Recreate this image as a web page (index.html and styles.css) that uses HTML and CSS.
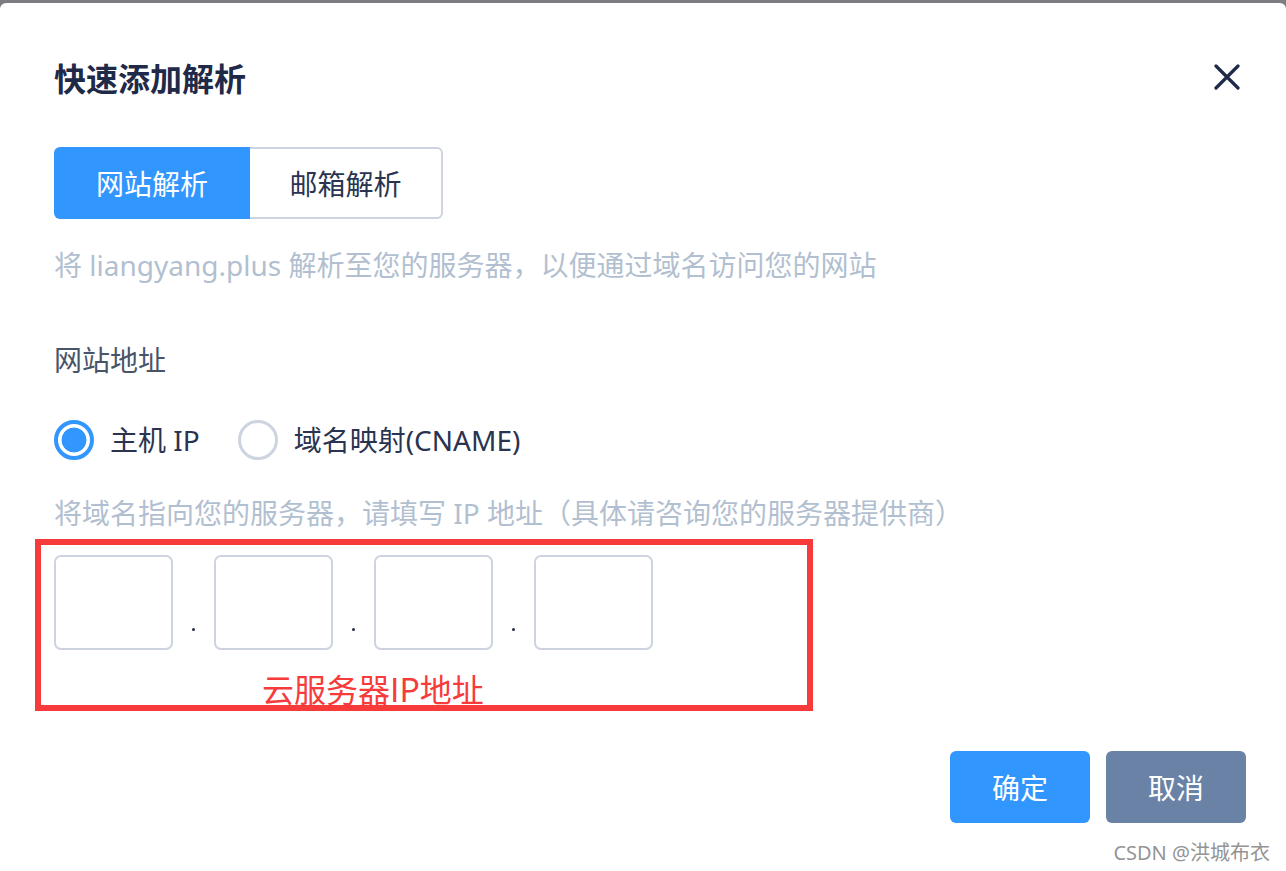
FILE: index.html
```html
<!DOCTYPE html>
<html lang="zh-CN">
<head>
<meta charset="utf-8">
<title>快速添加解析</title>
<link rel="stylesheet" href="styles.css">
</head>
<body>
<div class="dialog">
  <div class="header">
    <h1 class="title">快速添加解析</h1>
    <button class="close" aria-label="关闭">
      <svg width="26" height="26" viewBox="0 0 26 26"><path d="M2 2 L24 24 M24 2 L2 24" stroke="#1f2a48" stroke-width="3.2" stroke-linecap="round"/></svg>
    </button>
  </div>

  <div class="tabs">
    <div class="tab tab-active">网站解析</div>
    <div class="tab tab-idle">邮箱解析</div>
  </div>

  <p class="desc">将 liangyang.plus 解析至您的服务器，以便通过域名访问您的网站</p>

  <div class="label">网站地址</div>

  <div class="radios">
    <label class="radio"><span class="dot dot-on"></span><span class="radio-text">主机 IP</span></label>
    <label class="radio"><span class="dot"></span><span class="radio-text">域名映射(CNAME)</span></label>
  </div>

  <p class="hint">将域名指向您的服务器，请填写 IP 地址（具体请咨询您的服务器提供商）</p>

  <div class="annot">
    <div class="ip-row">
      <div class="ip-box"></div>
      <span class="sep"><i></i></span>
      <div class="ip-box"></div>
      <span class="sep"><i></i></span>
      <div class="ip-box"></div>
      <span class="sep"><i></i></span>
      <div class="ip-box"></div>
    </div>
    <div class="annot-text">云服务器IP地址</div>
  </div>

  <div class="actions">
    <button class="btn btn-ok">确定</button>
    <button class="btn btn-cancel">取消</button>
  </div>

  <div class="watermark">CSDN @洪城布衣</div>
</div>
</body>
</html>
```

FILE: styles.css
```css
html, body {
  margin: 0;
  padding: 0;
}
body {
  background: #7b7d81;
  font-family: "Noto Sans", "Noto Sans CJK SC", sans-serif;
  color: #2a3350;
}
.dialog {
  margin-top: 3px;
  background: #ffffff;
  border-radius: 6px 6px 0 0;
  height: 868px;
  box-sizing: border-box;
  padding: 54px 40px 0 54px;
}
.header {
  display: flex;
  align-items: center;
  justify-content: space-between;
  height: 40px;
}
.title {
  margin: 0;
  font-size: 32px;
  line-height: 40px;
  font-weight: 700;
  color: #1f2a48;
  font-family: "Noto Sans CJK SC", sans-serif;
}
.close {
  border: 0;
  background: none;
  padding: 0;
  margin-right: 6px;
  width: 26px;
  height: 26px;
  display: flex;
}
.tabs {
  display: flex;
  margin-top: 50px;
  height: 72px;
}
.tab {
  font-size: 28px;
  display: flex;
  align-items: center;
  justify-content: center;
  box-sizing: border-box;
  font-family: "Noto Sans CJK SC", sans-serif;
}
.tab-active {
  width: 196px;
  background: #3196fd;
  color: #ffffff;
  border-radius: 6px 0 0 6px;
}
.tab-idle {
  width: 193px;
  color: #2a3350;
  border: 2px solid #cdd3df;
  border-left: 0;
  border-radius: 0 6px 6px 0;
}
.desc {
  margin: 26px 0 0;
  font-size: 28px;
  line-height: 40px;
  color: #b2bfd0;
}
.label {
  margin-top: 55px;
  font-size: 28px;
  line-height: 40px;
  color: #4a5468;
}
.radios {
  margin-top: 40px;
  display: flex;
  align-items: center;
  height: 40px;
  gap: 38px;
}
.radio {
  display: flex;
  align-items: center;
  gap: 16px;
}
.dot {
  width: 40px;
  height: 40px;
  border-radius: 50%;
  box-sizing: border-box;
  border: 3px solid #cdd3df;
  background: #ffffff;
}
.dot-on {
  border: 4px solid #3196fd;
  background: radial-gradient(circle, #3196fd 0 12px, #ffffff 12.8px);
}
.radio-text {
  font-size: 28px;
  line-height: 40px;
  color: #2a3350;
}
.hint {
  margin: 33px 0 0;
  font-size: 28px;
  line-height: 40px;
  color: #b2bfd0;
}
.annot {
  margin: 6px 0 0 -19px;
  width: 778px;
  height: 172px;
  box-sizing: border-box;
  border: 6px solid #f73a3a;
  padding: 10px 0 0 13px;
}
.ip-row {
  display: flex;
  height: 95px;
}
.ip-box {
  width: 119px;
  height: 95px;
  box-sizing: border-box;
  border: 2px solid #cdd3df;
  border-radius: 7px;
}
.sep {
  width: 41px;
  display: flex;
  align-items: flex-end;
  justify-content: center;
  padding-bottom: 19px;
  box-sizing: border-box;
}
.sep i {
  width: 3px;
  height: 3px;
  border-radius: 50%;
  background: #1f2a48;
}
.annot-text {
  margin: 21px 0 0 208px;
  font-size: 32px;
  line-height: 34px;
  color: #f73a3a;
  font-family: "Noto Sans CJK SC", sans-serif;
}
.actions {
  margin-top: 40px;
  display: flex;
  justify-content: flex-end;
  gap: 16px;
}
.btn {
  width: 140px;
  height: 72px;
  border: 0;
  border-radius: 6px;
  color: #ffffff;
  font-size: 28px;
  font-family: "Noto Sans CJK SC", sans-serif;
  padding: 0;
}
.btn-ok {
  background: #3196fd;
}
.btn-cancel {
  background: #6a82a6;
}
.watermark {
  margin: 18px -24px 0 0;
  text-align: right;
  font-size: 20px;
  line-height: 24px;
  color: #949494;
}
```
